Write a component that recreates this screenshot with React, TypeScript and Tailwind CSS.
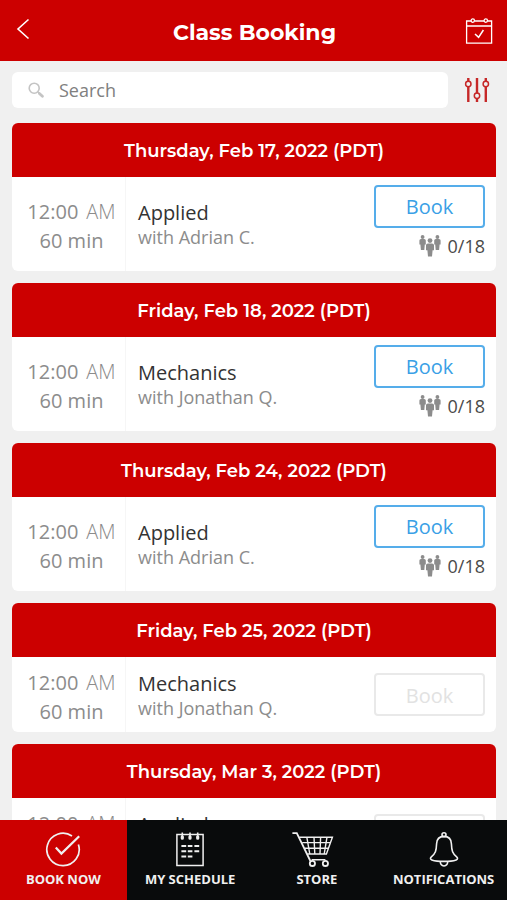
import { clsx } from 'clsx';
import type { ReactNode } from 'react';

interface ClassSession {
  date: string;
  name: string;
  instructor: string;
  booked?: string;
}

const sessions: ClassSession[] = [
  { date: 'Thursday, Feb 17, 2022 (PDT)', name: 'Applied', instructor: 'Adrian C.', booked: '0/18' },
  { date: 'Friday, Feb 18, 2022 (PDT)', name: 'Mechanics', instructor: 'Jonathan Q.', booked: '0/18' },
  { date: 'Thursday, Feb 24, 2022 (PDT)', name: 'Applied', instructor: 'Adrian C.', booked: '0/18' },
  { date: 'Friday, Feb 25, 2022 (PDT)', name: 'Mechanics', instructor: 'Jonathan Q.' },
  { date: 'Thursday, Mar 3, 2022 (PDT)', name: 'Applied', instructor: 'Adrian C.' },
];

function BackIcon() {
  return (
    <svg width="14" height="22" viewBox="0 0 14 22" fill="none" stroke="currentColor" strokeWidth="1.6">
      <path d="M12.5 1.5 2 11l10.5 9.5" />
    </svg>
  );
}

function CalendarCheckIcon() {
  return (
    <svg width="28" height="28" viewBox="0 0 28 28" fill="none" stroke="currentColor" strokeWidth="1.3">
      <path d="M6.2 4H1.6v22.2h25V4h-4.2M9.6 4H19M1.6 9h25" />
      <circle cx="7.8" cy="3.6" r="1.7" />
      <circle cx="20.8" cy="3.6" r="1.7" />
      <path d="m10 17 3.6 3.4 4.8-7.4" strokeWidth="1.5" />
    </svg>
  );
}

function FiltersIcon() {
  return (
    <svg width="26" height="26" viewBox="0 0 26 26" fill="none" stroke="currentColor">
      <path d="M4.3 1v3.4M4.3 9.6V25M13 1v15.2M13 21.4V25M21.8 1v3.4M21.8 9.6V25" strokeWidth="2.4" />
      <circle cx="4.3" cy="7" r="2.7" strokeWidth="1.5" />
      <circle cx="13" cy="18.8" r="2.7" strokeWidth="1.5" />
      <circle cx="21.8" cy="7" r="2.7" strokeWidth="1.5" />
    </svg>
  );
}

function SearchIcon() {
  return (
    <svg width="16" height="16" viewBox="0 0 16 16" fill="none" stroke="currentColor">
      <circle cx="6.2" cy="6.2" r="5" strokeWidth="1.6" />
      <path d="m9.8 9.8 1.6 1.6" strokeWidth="1.6" />
      <path d="m11.4 11.4 3 2.8" strokeWidth="2.8" strokeLinecap="round" />
    </svg>
  );
}

function PeopleIcon() {
  return (
    <svg width="22" height="22" viewBox="0 0 22 22" fill="currentColor">
      <circle cx="3.6" cy="2" r="1.9" />
      <path d="M2 4.1h3.2q1.6 0 1.6 1.5v4H5.8L5.3 15H1.9l-.5-5.4H.4v-4Q.4 4.1 2 4.1z" />
      <circle cx="18.4" cy="2" r="1.9" />
      <path d="M16.8 4.1H20q1.6 0 1.6 1.5v4h-1L20.100 15h-3.400l-.5-5.400h-1v-4q0-1.500 1.600-1.500z" />
      <circle cx="11" cy="5.6" r="2.4" />
      <path d="M9 8.400h4q2 0 2 1.800v5h-1.400L13 21.600H9l-.6-6.400H7v-5q0-1.800 2-1.800z" />
    </svg>
  );
}

function BookNowIcon() {
  return (
    <svg width="36" height="36" viewBox="0 0 36 36" fill="none" stroke="currentColor">
      <path d="M27 4A16.2 16.2 0 1 0 33.4 12.4" strokeWidth="1.7" />
      <path d="m10.8 15.6 5.6 6L34.2 4.2" strokeWidth="2.2" />
    </svg>
  );
}

function ScheduleIcon() {
  return (
    <svg width="28" height="36" viewBox="0 0 28 36" fill="none" stroke="currentColor">
      <path d="M.9 2.4h26.2v31.2H.9z" strokeWidth="1.5" />
      <path d="M6.3.4v5.2M14 .4v5.2M21.7.4v5.2" strokeWidth="1.6" />
      <path d="M6.3 4.8v1.4M14 4.8v1.4M21.7 4.8v1.4" strokeWidth="3.2" strokeLinecap="round" />
      <path
        d="M5.4 14h4.8M11.8 14h4.6M18.400 14h4.800M5.400 19.200h4.800M11.800 19.200h4.600M18.400 19.200h4.800M5.400 24.400h4.800M11.800 24.400h4.600"
        strokeWidth="2"
      />
    </svg>
  );
}

function CartIcon() {
  return (
    <svg width="50" height="36" viewBox="0 0 50 36" fill="none" stroke="currentColor" strokeWidth="1.4">
      <path d="M.4 1.2h4.400L18.400 29" strokeWidth="1.8" />
      <path d="M7.4 5.2h33l-6 16.800H15.400M10.200 10.600h28.200M13 16.200h23.400M19.600 27.800h13.800" />
      <path d="m14.8 5.2 3 16.800M22 5.200l.8 16.800M28.600 5.200 28 22M35 5.200 32.200 22" />
      <circle cx="20.4" cy="31.4" r="2.6" strokeWidth="1.8" />
      <circle cx="33.4" cy="31.4" r="2.6" strokeWidth="1.8" />
    </svg>
  );
}

function BellIcon() {
  return (
    <svg width="30" height="36" viewBox="0 0 30 36" fill="none" stroke="currentColor" strokeWidth="1.6">
      <circle cx="15" cy="2.8" r="2" />
      <path d="M15 4.400c-4.600 0-7.200 2.800-7.400 7.400-.3 7.400-1.200 9.600-5 12.800-1.600 1.300-1.500 2.700.2 3.300 3 1 7.600 1.500 12.200 1.500s9.200-.5 12.200-1.500c1.700-.6 1.800-2 .2-3.300-3.800-3.200-4.700-5.400-5-12.800-.2-4.600-2.800-7.400-7.400-7.400z" />
      <path d="M11.4 29.4a3.7 3.7 0 1 0 7.2 0" />
    </svg>
  );
}

const tabs: { label: string; icon: ReactNode; active?: boolean }[] = [
  { label: 'BOOK NOW', icon: <BookNowIcon />, active: true },
  { label: 'MY SCHEDULE', icon: <ScheduleIcon /> },
  { label: 'STORE', icon: <CartIcon /> },
  { label: 'NOTIFICATIONS', icon: <BellIcon /> },
];

function SessionCard({ session }: { session: ClassSession }) {
  const open = Boolean(session.booked);

  return (
    <section className="shrink-0 overflow-hidden rounded-md bg-white">
      <h2 className="flex h-[54px] items-center justify-center bg-[#cc0000] pt-px font-['Montserrat','Inter',sans-serif] text-lg font-semibold text-white">
        {session.date}
      </h2>
      <div className={clsx('flex', open ? 'h-[94px]' : 'h-[75px]')}>
        <div className="flex w-[114px] shrink-0 flex-col items-center justify-center border-r border-[#f6f6f6] pt-1 pl-1.5 text-xl leading-[29px] text-[#8c8c8c]">
          <p className="flex gap-2">
            12:00 <span className="font-light">AM</span>
          </p>
          <p>60 min</p>
        </div>
        <div className="flex min-w-0 flex-1 flex-col justify-center pt-0.5 pl-3">
          <h3 className="text-xl leading-[25px] text-[#333333]">{session.name}</h3>
          <p className="text-lg leading-[25px] text-[#8c8c8c]">with {session.instructor}</p>
        </div>
        <div className="flex flex-col justify-center pr-[11px]">
          <button
            type="button"
            disabled={!open}
            className={clsx(
              'h-[43px] w-[111px] rounded-[4px] border-2 pt-0.5 text-xl',
              open ? 'border-[#55adea] text-[#3a9fe6]' : 'border-[#e9e9e9] text-[#e2e2e2]'
            )}
          >
            Book
          </button>
          {open && (
            <div className="flex h-9 items-center justify-end gap-[7px] text-lg text-[#4a4a4a]">
              <span className="text-[#8c8c8c]">
                <PeopleIcon />
              </span>
              {session.booked}
            </div>
          )}
        </div>
      </div>
    </section>
  );
}

export default function App() {
  return (
    <div className="flex h-screen flex-col bg-[#f0f0f0] font-['Open_Sans',sans-serif]">
      <header className="flex h-[61px] shrink-0 items-center justify-between bg-[#cc0000] pr-3.5 pl-4 text-white">
        <button type="button" aria-label="Back" className="flex w-7 pb-1">
          <BackIcon />
        </button>
        <h1 className="pt-1 font-['Montserrat','Inter',sans-serif] text-[22px] font-bold">Class Booking</h1>
        <button type="button" aria-label="My calendar">
          <CalendarCheckIcon />
        </button>
      </header>

      <main className="flex min-h-0 flex-1 flex-col overflow-y-auto pt-[11px] pr-[11px] pl-3 [scrollbar-width:none]">
        <div className="flex shrink-0 items-center">
          <label className="flex h-9 flex-1 items-center gap-[15px] rounded-md bg-white pl-4 text-[#c4c4c4]">
            <SearchIcon />
            <input
              type="search"
              aria-label="Search"
              placeholder="Search"
              className="min-w-0 flex-1 text-lg text-[#333333] outline-none placeholder:text-[#808080]"
            />
          </label>
          <button type="button" aria-label="Filters" className="mr-1.5 ml-4 text-[#c62828]">
            <FiltersIcon />
          </button>
        </div>

        <div className="mt-[15px] flex flex-col gap-3">
          {sessions.map((session) => (
            <SessionCard key={session.date} session={session} />
          ))}
        </div>
      </main>

      <nav className="grid h-20 shrink-0 grid-cols-4 bg-[#090b0c]">
        {tabs.map((tab) => (
          <a
            key={tab.label}
            href="#"
            className={clsx(
              'flex flex-col items-center gap-px pt-3 text-[13px] leading-5 font-bold text-[#f0f0f0]',
              tab.active && 'bg-[#cc0000]'
            )}
          >
            {tab.icon}
            {tab.label}
          </a>
        ))}
      </nav>
    </div>
  );
}
